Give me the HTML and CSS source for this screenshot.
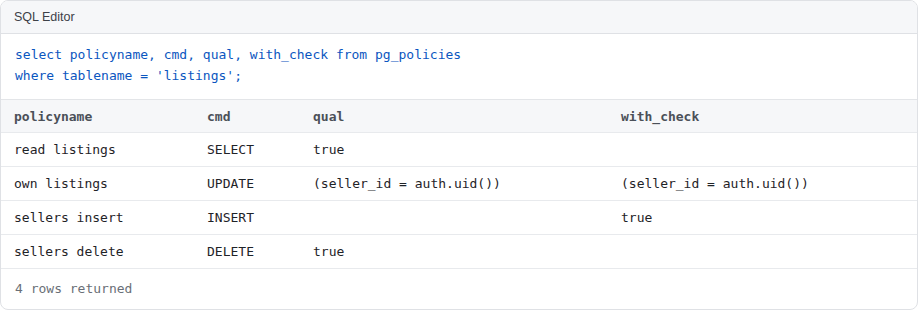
FILE: index.html
```html
<!DOCTYPE html>
<html>
<head>
<meta charset="utf-8">
<link rel="stylesheet" href="styles.css">
</head>
<body>
<div class="card">
  <div class="card-head">SQL Editor</div>
  <pre class="code">select policyname, cmd, qual, with_check from pg_policies
where tablename = 'listings';</pre>
  <div class="results">
    <div class="row head">
      <div class="cell">policyname</div>
      <div class="cell">cmd</div>
      <div class="cell">qual</div>
      <div class="cell">with_check</div>
    </div>
    <div class="row">
      <div class="cell">read listings</div>
      <div class="cell">SELECT</div>
      <div class="cell">true</div>
      <div class="cell"></div>
    </div>
    <div class="row">
      <div class="cell">own listings</div>
      <div class="cell">UPDATE</div>
      <div class="cell">(seller_id = auth.uid())</div>
      <div class="cell">(seller_id = auth.uid())</div>
    </div>
    <div class="row">
      <div class="cell">sellers insert</div>
      <div class="cell">INSERT</div>
      <div class="cell"></div>
      <div class="cell">true</div>
    </div>
    <div class="row">
      <div class="cell">sellers delete</div>
      <div class="cell">DELETE</div>
      <div class="cell">true</div>
      <div class="cell"></div>
    </div>
  </div>
  <div class="card-foot">4 rows returned</div>
</div>
</body>
</html>
```
FILE: styles.css
```css
html, body {
  margin: 0;
  padding: 0;
  background: #ffffff;
}
.card {
  width: 916px;
  height: 308px;
  border: 1px solid #dfe1e5;
  border-radius: 8px;
  overflow: hidden;
  background: #ffffff;
  display: flex;
  flex-direction: column;
}
.card-head {
  height: 32px;
  line-height: 32px;
  padding: 0 13px;
  background: #f6f7f9;
  border-bottom: 1px solid #dfe1e5;
  font-family: "Liberation Sans", Arial, sans-serif;
  font-size: 12.5px;
  color: #3d4148;
}
.code {
  margin: 0;
  padding: 10px 14px 13px;
  font-family: "DejaVu Sans Mono", monospace;
  font-size: 13px;
  line-height: 21px;
  color: #0b56c0;
  border-bottom: 1px solid #e3e5e8;
}
.results {
  display: flex;
  flex-direction: column;
}
.row {
  display: grid;
  grid-template-columns: 193px 106px 308px 1fr;
  height: 33px;
  align-items: center;
  border-bottom: 1px solid #e8eaed;
  font-family: "DejaVu Sans Mono", monospace;
  font-size: 13px;
  color: #1f2328;
}
.row.head {
  background: #f6f7f9;
  font-weight: bold;
  color: #4b5058;
  height: 32px;
}
.cell {
  padding-left: 13px;
  white-space: pre;
}
.card-foot {
  flex: 1;
  display: flex;
  align-items: center;
  padding: 0 14px 2px;
  font-family: "DejaVu Sans Mono", monospace;
  font-size: 13px;
  color: #6a6f77;
}
```
